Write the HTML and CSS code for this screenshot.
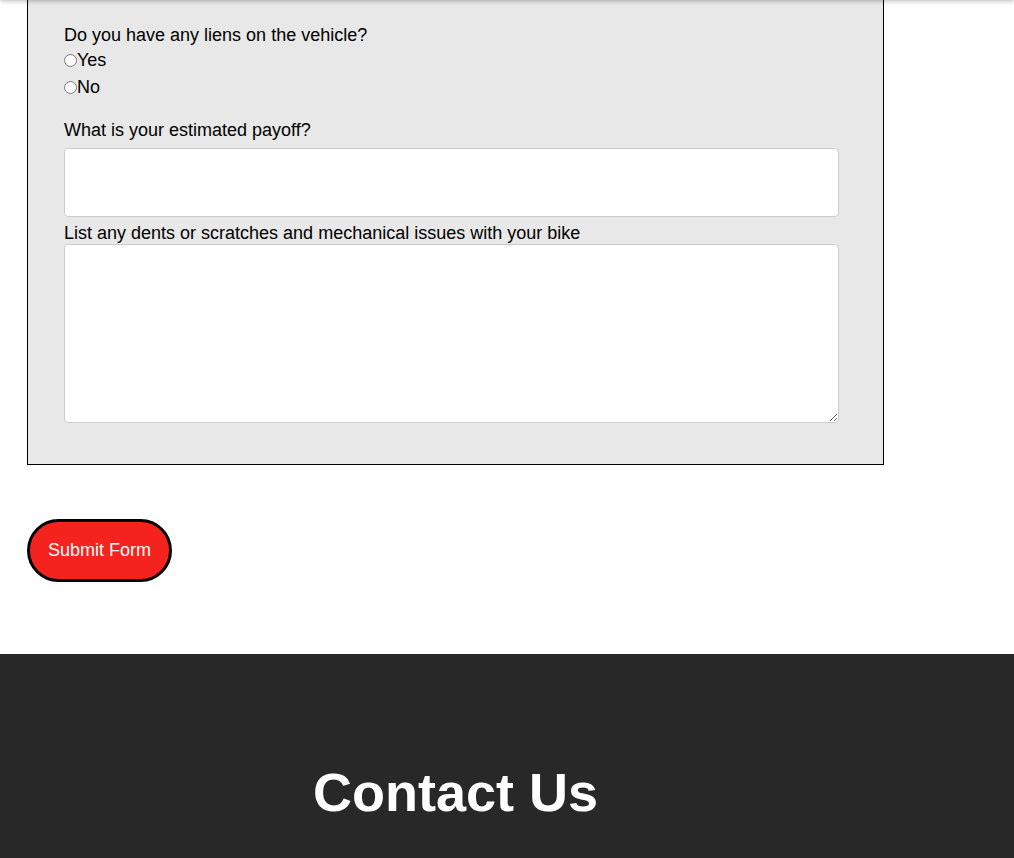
FILE: index.html
```html
<!DOCTYPE html>
<html lang="en">
<head>
<meta charset="utf-8">
<title>Sell Your Bike</title>
<link rel="stylesheet" href="styles.css">
</head>
<body>
<div class="topbar"></div>
<main class="page">
  <form class="form-box">
    <p class="q-label">Do you have any liens on the vehicle?</p>
    <label class="option option-first"><input type="radio" name="liens" value="yes">Yes</label>
    <label class="option"><input type="radio" name="liens" value="no">No</label>

    <label class="q-label q-group" for="payoff">What is your estimated payoff?</label>
    <input class="text-input" type="text" id="payoff">

    <label class="q-label q-after-input" for="issues">List any dents or scratches and mechanical issues with your bike</label>
    <textarea class="text-area" id="issues"></textarea>
  </form>
  <button class="submit-btn" type="button">Submit Form</button>
</main>
<footer class="footer">
  <div class="footer-inner">
    <h2 class="footer-title">Contact Us</h2>
  </div>
</footer>
</body>
</html>
```
FILE: styles.css
```css
html, body {
  margin: 0;
  padding: 0;
  background: #ffffff;
  font-family: "Liberation Sans", Arial, sans-serif;
  color: #000;
}

.topbar {
  position: fixed;
  left: 0;
  right: 0;
  top: -60px;
  height: 60px;
  background: #fff;
  box-shadow: 0 1px 5px rgba(0, 0, 0, 0.28);
  z-index: 10;
}

.page {
  padding: 0 0 72px 27px;
}

.form-box {
  box-sizing: border-box;
  width: 857px;
  background: #e8e8e8;
  border: 1px solid #000;
  border-top: none;
  padding: 25px 44px 41px 36px;
  display: flex;
  flex-direction: column;
  align-items: flex-start;
}

.q-label {
  margin: 0;
  font-size: 18px;
  line-height: 21px;
}

.q-group {
  margin-top: 22px;
}

.q-after-input {
  margin-top: 6px;
}

.option {
  display: flex;
  align-items: center;
  height: 21px;
  font-size: 18px;
  line-height: 21px;
  margin-top: 6px;
}

.option-first {
  margin-top: 4px;
}

.option input {
  margin: 0;
  width: 13px;
  height: 13px;
}

.text-input {
  box-sizing: border-box;
  width: 775px;
  height: 69px;
  margin-top: 7px;
  border: 1px solid #cccccc;
  border-radius: 4px;
  background: #fff;
  font-family: inherit;
  font-size: 16px;
}

.text-area {
  box-sizing: border-box;
  width: 775px;
  height: 179px;
  margin-top: 0;
  border: 1px solid #cccccc;
  border-radius: 4px;
  background: #fff;
  font-family: inherit;
  font-size: 16px;
}

.submit-btn {
  margin-top: 54px;
  display: block;
  background: #f5231e;
  color: #fff;
  border: 3px solid #000;
  border-radius: 32px;
  font-family: "Liberation Sans", Arial, sans-serif;
  font-size: 18px;
  line-height: 21px;
  padding: 18px 18px;
  cursor: pointer;
}

.footer {
  background: #282828;
  padding-top: 107px;
  min-height: 300px;
}

.footer-inner {
  margin-left: 27px;
  width: 857px;
}

.footer-title {
  margin: 0;
  color: #fff;
  font-size: 54px;
  font-weight: bold;
  text-align: center;
}
```
